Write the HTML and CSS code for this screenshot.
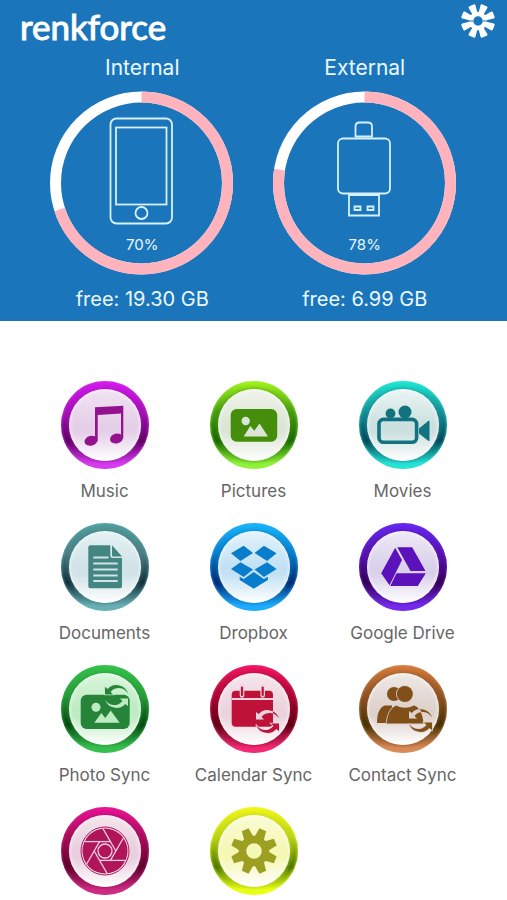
FILE: index.html
```html
<!DOCTYPE html>
<html lang="en">
<head>
<meta charset="utf-8">
<meta name="viewport" content="width=device-width, initial-scale=1">
<title>renkforce</title>
<link rel="stylesheet" href="styles.css">
</head>
<body>
<svg class="defs" aria-hidden="true">
  <defs>
    <path id="arrow" d="M-12-8.500 -9.300-6.500A12 12 0 0 1 11-2A10.500 10.500 0 0 0-6.500-3.500L-4-1H-12Z"/>
    <path id="flare" d="M-2.400-7 -3.700-15.500Q-3.700-17-2.200-17H2.200Q3.700-17 3.700-15.500L2.400-7Z"/>
    <path id="tooth" d="M-5-13 -3.600-23H3.600L5-13Z"/>
    <path id="blade" d="M5.400-9.400H-20.400"/>
    <clipPath id="calendar-page"><rect x="21.700" y="25.700" width="41.300" height="36" rx="4"/></clipPath>
    <clipPath id="shoulders"><path d="M27.500 58.500Q29 44 37 40.500 46 45 55 40.500 63 43 64.500 58.500Z"/></clipPath>
  </defs>
</svg>
<header class="header">
  <div class="bar">
    <h1 class="logo">renkforce</h1>
    <button class="settings" type="button" aria-label="Settings">
      <svg viewBox="-18 -18 36 36" fill="#fff">
        <g transform="rotate(22.5)">
          <use href="#flare"/><use href="#flare" transform="rotate(45)"/><use href="#flare" transform="rotate(90)"/><use href="#flare" transform="rotate(135)"/><use href="#flare" transform="rotate(180)"/><use href="#flare" transform="rotate(225)"/><use href="#flare" transform="rotate(270)"/><use href="#flare" transform="rotate(315)"/>
        </g>
        <circle r="7" fill="none" stroke="#fff" stroke-width="4.500"/>
        <path d="M-15 0H-5M5 0H15" stroke="#1b75bb" stroke-width="1"/>
      </svg>
    </button>
  </div>
  <div class="storages">
    <section class="storage">
      <h2 class="name">Internal</h2>
      <div class="gauge">
        <svg viewBox="0 0 184 184" fill="none">
          <circle class="track" cx="91.500" cy="92" r="86"/>
          <circle class="used" cx="91.500" cy="92" r="86" pathLength="100" stroke-dasharray="70 100" transform="rotate(-90 91.500 92)"/>
          <g stroke="#d5f1ff" stroke-width="1.800">
            <rect x="60.500" y="27.500" width="61.500" height="105" rx="6"/>
            <rect x="66" y="36.500" width="50.500" height="77"/>
            <circle cx="91.500" cy="122" r="6"/>
          </g>
        </svg>
        <span class="percent">70%</span>
      </div>
      <p class="free">free: 19.30 GB</p>
    </section>
    <section class="storage">
      <h2 class="name">External</h2>
      <div class="gauge">
        <svg viewBox="0 0 184 184" fill="none">
          <circle class="track" cx="91.500" cy="92" r="86"/>
          <circle class="used" cx="91.500" cy="92" r="86" pathLength="100" stroke-dasharray="77.500 100" transform="rotate(-90 91.500 92)"/>
          <g stroke="#d5f1ff" stroke-width="1.800">
            <path d="M82.500 45.500V35.500Q82.500 31.500 86.500 31.500H95Q99 31.500 99 35.500V45.500Z"/>
            <rect x="65" y="47.500" width="52" height="55" rx="5"/>
            <path d="M76 104V124.500H106V104Z"/>
            <path d="M81.500 115.500H87.500V119H81.500ZM94.500 115.500H100.500V119H94.500Z"/>
          </g>
        </svg>
        <span class="percent">78%</span>
      </div>
      <p class="free">free: 6.99 GB</p>
    </section>
  </div>
</header>
<main class="grid">
  <button class="tile music" type="button">
    <span class="disk"><svg viewBox="0 0 88 88"><path d="M34 26.300 62.300 24.700V57H60V32.500L36.700 34V60H34Z"/><ellipse cx="30" cy="59.800" rx="6.600" ry="4.900" transform="rotate(-15 30 59.800)"/><ellipse cx="55.500" cy="57.500" rx="6.600" ry="4.900" transform="rotate(-15 55.500 57.500)"/></svg></span>
    <span class="label">Music</span>
  </button>
  <button class="tile pictures" type="button">
    <span class="disk"><svg viewBox="0 0 88 88"><rect x="20.700" y="28" width="46.500" height="32.800" rx="6"/><g class="cut"><circle cx="35.700" cy="40" r="4.200"/><path d="M33.700 55.500 40.300 45 44.300 49.700 49.500 42.500 58 55.500Z"/></g></svg></span>
    <span class="label">Pictures</span>
  </button>
  <button class="tile movies" type="button">
    <span class="disk"><svg viewBox="0 0 88 88"><rect x="20" y="38.400" width="37.600" height="22.800" rx="4.500" fill="none" stroke="currentColor" stroke-width="3.600"/><circle cx="31.500" cy="32.500" r="4.900"/><circle cx="46" cy="31" r="6.500"/><path d="M60 47.500 69.500 39.700H70.500V60H69.500L60 52.500Z"/></svg></span>
    <span class="label">Movies</span>
  </button>
  <button class="tile documents" type="button">
    <span class="disk"><svg viewBox="0 0 88 88"><path d="M29.300 22.300H49.300V32.500Q49.300 35 51.800 35H61V63.300Q61 65.300 59 65.300H29.300Q27.300 65.300 27.300 63.300V24.300Q27.300 22.300 29.300 22.300ZM51 22.300 61 33.500H52Q51 33.500 51 32.500Z"/><path class="line" d="M32.300 34.500H47.500M32.300 40.500H56.700M32.300 46.500H56.700M32.300 52.500H56.700M32.300 58H56.700" stroke-width="1.900"/></svg></span>
    <span class="label">Documents</span>
  </button>
  <button class="tile dropbox" type="button">
    <span class="disk"><svg viewBox="0 0 88 88"><path d="M21 30.300 33.700 22.700 43 30 30.500 38ZM66.600 30.300 53.900 22.700 44.600 30 57.100 38ZM21 46 30.500 39.200 43 46.500 33.700 54ZM66.600 46 57.100 39.200 44.600 46.500 53.900 54ZM29.700 53.700 33.700 56 43.800 49 53.900 56 57.900 53.700V57L43.800 65.700 29.700 57Z"/></svg></span>
    <span class="label">Dropbox</span>
  </button>
  <button class="tile drive" type="button">
    <span class="disk"><svg viewBox="0 0 88 88"><path d="M36.200 24.700 43 37 30.500 62.300 22.200 50.300ZM38.200 24.300H53.200L66.500 48H51.500ZM37.500 50.300H66.800L58.800 63H31.200Z"/></svg></span>
    <span class="label">Google Drive</span>
  </button>
  <button class="tile photo-sync" type="button">
    <span class="disk"><svg viewBox="0 0 88 88"><rect x="19.700" y="29.700" width="49" height="34.300" rx="6"/><use class="halo" href="#arrow" transform="translate(56 30.500)"/><g class="cut"><circle cx="35" cy="42.300" r="4.500"/><path d="M33.300 57.700 40.300 48 44.300 53 49.700 45.500 58.700 57.700Z"/><use href="#arrow" transform="translate(55 32.500) rotate(180)"/></g></svg></span>
    <span class="label">Photo Sync</span>
  </button>
  <button class="tile calendar-sync" type="button">
    <span class="disk"><svg viewBox="0 0 88 88"><use href="#arrow" transform="translate(58 55.500)"/><rect x="21.700" y="25.700" width="41.300" height="36" rx="4"/><path class="line" d="M21.700 34H63" stroke-width="1.800"/><path class="line" d="M32 21.500V30.500M52.700 21.500V30.500" stroke-width="4.600" stroke-linecap="round"/><path d="M32 22.500V30M52.700 22.500V30" stroke="currentColor" stroke-width="2.200" stroke-linecap="round"/><g class="cut" clip-path="url(#calendar-page)"><use href="#arrow" transform="translate(58 55.500)"/></g><use class="halo" href="#arrow" transform="translate(57 57.500) rotate(180)"/></svg></span>
    <span class="label">Calendar Sync</span>
  </button>
  <button class="tile contact-sync" type="button">
    <span class="disk"><svg viewBox="0 0 88 88"><circle cx="35" cy="29" r="7"/><path d="M18 58Q18 43 26 40.500H33V58Z"/><circle class="halo" cx="45.800" cy="29" r="8"/><use href="#arrow" transform="translate(62 54.500)"/><path class="halo" d="M27.500 58.500Q29 44 37 40.500 46 45 55 40.500 63 43 64.500 58.500Z"/><g class="cut" clip-path="url(#shoulders)"><use href="#arrow" transform="translate(62 54.500)"/></g><use class="halo" href="#arrow" transform="translate(61 56.500) rotate(180)"/></svg></span>
    <span class="label">Contact Sync</span>
  </button>
  <button class="tile camera" type="button" aria-label="Camera">
    <span class="disk"><svg viewBox="-44 -44 88 88"><circle r="24" fill="none" stroke="currentColor"/><circle r="22.500"/><g class="line" stroke-width="1.300"><use href="#blade"/><use href="#blade" transform="rotate(60)"/><use href="#blade" transform="rotate(120)"/><use href="#blade" transform="rotate(180)"/><use href="#blade" transform="rotate(240)"/><use href="#blade" transform="rotate(300)"/><circle r="7"/></g></svg></span>
  </button>
  <button class="tile options" type="button" aria-label="Options">
    <span class="disk"><svg viewBox="-44 -44 88 88"><circle r="11.500" fill="none" stroke="currentColor" stroke-width="7.500"/><g transform="rotate(22.5)"><use href="#tooth"/><use href="#tooth" transform="rotate(45)"/><use href="#tooth" transform="rotate(90)"/><use href="#tooth" transform="rotate(135)"/><use href="#tooth" transform="rotate(180)"/><use href="#tooth" transform="rotate(225)"/><use href="#tooth" transform="rotate(270)"/><use href="#tooth" transform="rotate(315)"/></g></svg></span>
  </button>
</main>
</body>
</html>
```
FILE: styles.css
```css
* {
  box-sizing: border-box;
}

body {
  margin: 0;
  background: #fff;
  font-family: Inter, "Liberation Sans", sans-serif;
}

h1, h2, p {
  margin: 0;
  font-weight: 400;
}

button {
  padding: 0;
  border: 0;
  background: none;
  font: inherit;
  cursor: pointer;
}

svg {
  display: block;
}

.defs {
  position: absolute;
  width: 0;
  height: 0;
}

.header {
  padding-bottom: 7px;
  background: #1b75bb;
  color: #eaf8ff;
}

.bar {
  display: flex;
  justify-content: space-between;
  align-items: flex-start;
  height: 53px;
  padding: 3px 11px 0 20px;
}

.logo {
  color: #fff;
  font-family: Lato, "Open Sans", sans-serif;
  font-size: 35px;
  -webkit-text-stroke: 1px #fff;
  line-height: 46px;
}

.settings svg {
  width: 36px;
  height: 36px;
}

.storages {
  display: grid;
  grid-template-columns: 1fr 1fr;
  padding: 0 31px;
}

.storage {
  display: flex;
  flex-direction: column;
  align-items: center;
}

.name {
  margin-bottom: 8px;
  font-size: 21px;
  line-height: 30px;
}

.gauge {
  position: relative;
  width: 184px;
}

.track,
.used {
  stroke: #fff;
  stroke-width: 11;
}

.used {
  stroke: #ffb3bc;
}

.percent {
  position: absolute;
  right: 0;
  bottom: 20px;
  left: 0;
  font-size: 15px;
  line-height: 20px;
  text-align: center;
}

.free {
  margin-top: 10px;
  font-size: 20px;
  line-height: 29px;
}

.grid {
  display: grid;
  grid-template-columns: repeat(3, 1fr);
  row-gap: 20px;
  padding: 60px 30px 6px;
}

.tile {
  display: flex;
  flex-direction: column;
  align-items: center;
  color: var(--ink);
}

.disk {
  position: relative;
  width: 88px;
  height: 88px;
  border-radius: 50%;
  background: linear-gradient(var(--hi), var(--mid) 35%, var(--dark) 68%, var(--lo) 94%);
  box-shadow: inset 0 0 3px var(--lo);
}

.disk::before {
  content: "";
  position: absolute;
  inset: 8px;
  border-radius: 50%;
  background: linear-gradient(var(--face), var(--cut) 50%, var(--cut) 60%, #fff);
  box-shadow: 0 0 4px var(--mid), inset 0 0 4px #fff;
}

.disk svg {
  position: relative;
  width: 100%;
  height: 100%;
  fill: currentColor;
}

.disk .cut {
  fill: var(--cut);
}

.line {
  fill: none;
  stroke: var(--cut);
}

.halo {
  stroke: var(--cut);
  stroke-width: 1.5;
  paint-order: stroke;
}

.label {
  margin-top: 10px;
  color: #666;
  font-size: 17px;
  line-height: 24px;
  white-space: nowrap;
}

.music { --hi: #d51aee; --mid: #a412b5; --dark: #5b005f; --lo: #d63cf0; --face: #f1e2f4; --cut: #e5cfe8; --ink: #93128f; }
.pictures { --hi: #a8f51c; --mid: #479d10; --dark: #176500; --lo: #92f23c; --face: #f0f4eb; --cut: #dce5d5; --ink: #458e0b; }
.movies { --hi: #20ead2; --mid: #168e98; --dark: #064457; --lo: #26e4d5; --face: #eaf5f4; --cut: #cbe0df; --ink: #11737f; }
.documents { --hi: #4f9e9d; --mid: #4b7f84; --dark: #102c38; --lo: #68b1b5; --face: #e4f1f3; --cut: #d1e3e8; --ink: #438581; }
.dropbox { --hi: #18b9fa; --mid: #087bc9; --dark: #02266e; --lo: #20acff; --face: #e2f2fc; --cut: #c2e1f4; --ink: #087dcb; }
.drive { --hi: #6429f3; --mid: #5714b0; --dark: #33004e; --lo: #752bed; --face: #eeeaf6; --cut: #d9d0ea; --ink: #5b12bb; }
.photo-sync { --hi: #36c34b; --mid: #279b39; --dark: #06450f; --lo: #39bf50; --face: #d9f6dc; --cut: #bdebc2; --ink: #26833a; }
.calendar-sync { --hi: #f31562; --mid: #a90933; --dark: #590010; --lo: #f32b74; --face: #f6e5ec; --cut: #ebd3de; --ink: #bf1239; }
.contact-sync { --hi: #d77a3c; --mid: #8d5425; --dark: #423000; --lo: #d98b57; --face: #eee9e7; --cut: #ddd1cb; --ink: #805018; }
.camera { --hi: #ee109a; --mid: #a60e5a; --dark: #590027; --lo: #ce2c83; --face: #f3e5ed; --cut: #e9cfdf; --ink: #b01559; }
.options { --hi: #f2f51c; --mid: #b9d319; --dark: #477400; --lo: #eaff18; --face: #fbfcd4; --cut: #f5f7b4; --ink: #9c9f22; }
```
